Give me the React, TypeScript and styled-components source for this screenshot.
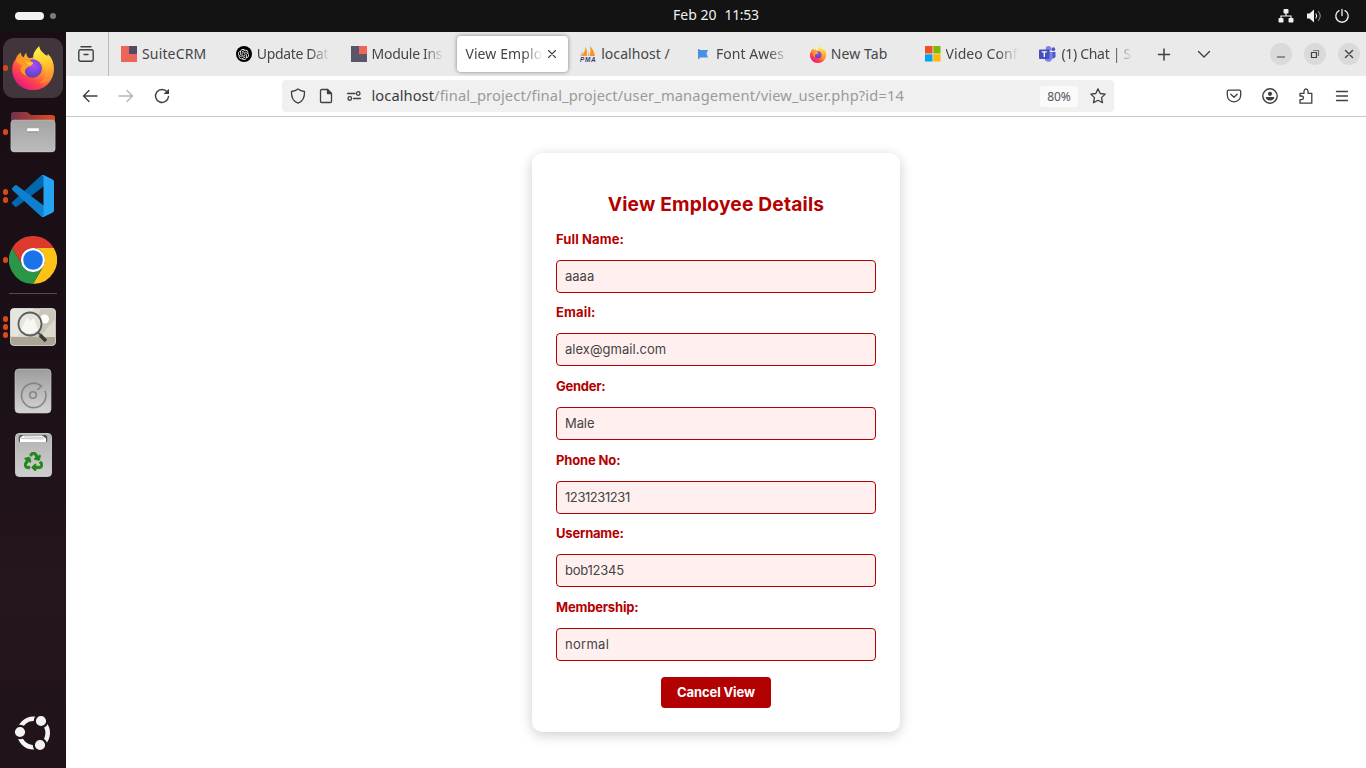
import React from 'react';
import styled, { createGlobalStyle } from 'styled-components';
import { FaRecycle } from 'react-icons/fa';
import { SiOpenai } from 'react-icons/si';

const ui = '"Noto Sans", "Open Sans", sans-serif';
const web = 'Inter, "Liberation Sans", sans-serif';

const GlobalStyle = createGlobalStyle`
  * { box-sizing: border-box; }
  body { margin: 0; overflow: hidden; background: #131313; font-family: ${ui}; }
  svg { display: block; flex: none; }
`;

const Desktop = styled.div`
  display: flex;
  flex-direction: column;
  width: 1366px;
  height: 768px;
`;

/* ---------- system bar ---------- */

const SystemBar = styled.header`
  display: grid;
  grid-template-columns: 657px auto 1fr;
  align-items: center;
  height: 32px;
  padding: 0 16px 0 15px;
  background: #131313;
`;
const Workspaces = styled.div`
  display: flex;
  align-items: center;
  gap: 6px;
`;
const ActiveWorkspace = styled.span`
  width: 29px;
  height: 8px;
  border-radius: 4px;
  background: #f2f2f2;
`;
const IdleWorkspace = styled.span`
  width: 6px;
  height: 6px;
  border-radius: 50%;
  background: #7d7d7d;
`;
const Clock = styled.div`
  display: flex;
  gap: 8px;
  color: #f0f0f0;
  font-size: 14px;
  line-height: 20px;
  padding: 0 0 2px 1px;
`;
const Time = styled.span`
  letter-spacing: -0.3px;
`;
const StatusIcons = styled.div`
  display: flex;
  justify-content: flex-end;
  align-items: center;
  gap: 12px;
`;

/* ---------- dock ---------- */

const Workarea = styled.div`
  display: flex;
  flex: 1;
  min-height: 0;
`;
const Dock = styled.nav`
  display: flex;
  flex-direction: column;
  width: 66px;
  padding: 4px 0 3px;
  background: linear-gradient(#190e14, #1b1017 45%, #25151d 75%, #20131a);
`;
const DockItem = styled.div`
  display: flex;
  align-items: center;
  height: 64px;
`;
const RunningDots = styled.div`
  display: flex;
  flex-direction: column;
  align-items: center;
  gap: 2.4px;
  width: 11px;
  margin-right: -8px;
  z-index: 1;
`;
const Dot = styled.i`
  width: 5.6px;
  height: 5.6px;
  border-radius: 50%;
  background: #da4a16;
`;
const DockTile = styled.div<{ $active?: boolean }>`
  display: flex;
  align-items: center;
  justify-content: center;
  width: 60px;
  height: 60px;
  border-radius: 11px;
  background: ${(p) => (p.$active ? '#41363c' : 'transparent')};
`;
const DockDivider = styled.hr`
  width: 48px;
  height: 1px;
  margin: 1px 9px;
  border: 0;
  background: #55494f;
`;
const DockSpacer = styled.div`
  flex: 1;
`;

/* ---------- browser chrome ---------- */

const Browser = styled.main`
  display: flex;
  flex: 1;
  flex-direction: column;
  background: #fff;
  color: #3c3c40;
`;
const TabStrip = styled.div`
  display: flex;
  align-items: center;
  height: 44px;
  background: #eaeaea;
`;
const TabOverview = styled.div`
  display: flex;
  align-items: center;
  justify-content: center;
  width: 43px;
  height: 44px;
  padding-right: 2px;
  border-right: 1px solid #bdbdbd;
`;
const TabList = styled.div`
  display: flex;
  padding-left: 2px;
`;
const Tab = styled.div<{ $selected?: boolean }>`
  display: flex;
  align-items: center;
  width: ${(p) => (p.$selected ? 110.8 : 114.8)}px;
  height: 36px;
  margin: ${(p) => (p.$selected ? '0 2px' : '0')};
  padding: ${(p) => (p.$selected ? '0 9px 0 8px' : '0 11px 0 10px')};
  gap: ${(p) => (p.$selected ? 2 : 5)}px;
  border-radius: 4px;
  background: ${(p) => (p.$selected ? '#fff' : 'transparent')};
  box-shadow: ${(p) => (p.$selected ? '0 0 4px rgba(0, 0, 0, 0.45)' : 'none')};
`;
const TabTitle = styled.span<{ $spacing: number; $fade: boolean }>`
  flex: 1;
  overflow: hidden;
  white-space: nowrap;
  font-size: 14px;
  line-height: 20px;
  letter-spacing: ${(p) => p.$spacing}px;
  color: #45454a;
  ${(p) => p.$fade && 'mask-image: linear-gradient(to left, transparent, #000 20px);'}
`;
const StripActions = styled.div`
  display: flex;
  align-items: center;
  gap: 24px;
  margin-left: 12px;
`;
const WindowControls = styled.div`
  display: flex;
  gap: 12px;
  margin: 0 6px 0 auto;
`;
const WindowButton = styled.button`
  display: flex;
  align-items: center;
  justify-content: center;
  width: 22px;
  height: 22px;
  padding: 0;
  border: 0;
  border-radius: 50%;
  background: #dadada;
`;
const Toolbar = styled.div`
  display: flex;
  align-items: center;
  height: 41px;
  padding: 0 16px;
  border-bottom: 1px solid #c6c6c6;
  background: #fff;
`;
const NavButtons = styled.div`
  display: flex;
  gap: 20px;
  width: 200px;
`;
const UrlBar = styled.div`
  display: flex;
  align-items: center;
  width: 832px;
  height: 32px;
  padding: 0 8px;
  border-radius: 4px;
  background: #f0f0f0;
`;
const UrlIcons = styled.div`
  display: flex;
  gap: 12px;
`;
const Url = styled.span`
  flex: 1;
  margin-left: 9.5px;
  padding-bottom: 2px;
  color: #9a9a9a;
  font-size: 14.67px;
  line-height: 20px;
  letter-spacing: 0.14px;
  white-space: nowrap;
`;
const Host = styled.span`
  color: #3a3a3e;
  letter-spacing: 0.07px;
`;
const ZoomLevel = styled.span`
  width: 38px;
  margin-right: 12px;
  border-radius: 3px;
  background: #fafafa;
  color: #55555a;
  font-size: 12px;
  line-height: 21px;
  text-align: center;
`;
const ToolbarActions = styled.div`
  display: flex;
  gap: 20px;
  margin-left: auto;
`;

/* ---------- page ---------- */

const Page = styled.section`
  flex: 1;
  padding-top: 36px;
  background: #fff;
  font-family: ${web};
`;
const Card = styled.form`
  display: flex;
  flex-direction: column;
  width: 368px;
  height: 579px;
  margin: 0 auto;
  padding: 24px;
  border-radius: 10px;
  background: #fff;
  box-shadow: 0 3px 13px rgba(0, 0, 0, 0.2);
`;
const Title = styled.h2`
  margin: 0 0 8.75px;
  padding-top: 13px;
  color: #b30000;
  font-size: 19.2px;
  font-weight: 700;
  line-height: 28px;
  letter-spacing: 0.18px;
  text-align: center;
  white-space: nowrap;
`;
const Field = styled.div`
  height: 73.6px;
`;
const Label = styled.label<{ $spacing: number }>`
  display: block;
  height: 33px;
  color: #b30000;
  font-size: 13px;
  font-weight: 700;
  line-height: 25px;
  letter-spacing: ${(p) => p.$spacing}px;
`;
const Value = styled.div<{ $spacing: number }>`
  height: 33px;
  padding: 0 8px;
  border: 1px solid #b30000;
  border-radius: 4px;
  background: #fff0ef;
  color: #444;
  font-size: 13px;
  line-height: 31px;
  letter-spacing: ${(p) => p.$spacing}px;
`;
const CancelButton = styled.button`
  align-self: center;
  width: 110px;
  height: 31px;
  margin-top: 8.65px;
  padding: 0;
  border: 0;
  border-radius: 4px;
  background: #b30000;
  color: #fff;
  font: 700 13px ${web};
  letter-spacing: -0.12px;
`;

/* ---------- app icons ---------- */

const FirefoxIcon = ({ w, h, id }: { w: number; h: number; id: string }) => (
  <svg width={w} height={h} viewBox="0 0 126 133">
    <defs>
      <linearGradient id={`${id}-body`} x1="0.85" y1="0.12" x2="0.2" y2="0.95">
        <stop offset="0" stopColor="#ffe23c" />
        <stop offset="0.35" stopColor="#ff9a2a" />
        <stop offset="0.65" stopColor="#ff4a45" />
        <stop offset="1" stopColor="#e8118a" />
      </linearGradient>
      <linearGradient id={`${id}-flame`} x1="0.5" y1="0" x2="0.7" y2="1">
        <stop offset="0" stopColor="#fff04a" />
        <stop offset="0.5" stopColor="#ffc42f" />
        <stop offset="1" stopColor="#ff7a33" />
      </linearGradient>
      <radialGradient id={`${id}-globe`} cx="0.55" cy="0.35" r="0.7">
        <stop offset="0" stopColor="#a94bff" />
        <stop offset="1" stopColor="#5341b8" />
      </radialGradient>
    </defs>
    <path fill={`url(#${id}-body)`} d="M26 20C27 30 31 33 35 34C37 27 40 23 43 21C43 29 46 34 53 37L66 34C75 28 95 28 105 38L114 30C123 43 126 56 126 70C126 106 98 133 63 133C28 133 0 106 0 70C0 58 4 47 11 39C13 31 19 25 26 20Z" />
    <path fill={`url(#${id}-flame)`} d="M82 0C82 10 91 20 104 29C108 30 107 22 110 26C124 43 128 62 123 82C116 104 98 114 81 112C99 104 107 85 99 65C93 50 76 49 65 38C60 25 72 9 82 0Z" />
    <circle cx="62" cy="68" r="28" fill={`url(#${id}-globe)`} />
    <path fill="#ff9b20" d="M11 43C15 37 23 36 29 36L47 36C52 39 55 42 57 47L64 51C61 62 53 62 48 64C36 69 36 82 46 91C24 84 20 64 32 58C25 56 18 54 11 43Z" />
    <path fill="#ffc42c" d="M40 47L61 49C65 51 60 57 51 59C47 57 44 52 40 47Z" />
  </svg>
);

const FilesIcon = () => (
  <svg width="46" height="42" viewBox="0 0 46 42">
    <defs>
      <linearGradient id="folder-back"><stop stopColor="#74304f" /><stop offset="1" stopColor="#dd4d1d" /></linearGradient>
      <linearGradient id="folder-front" x2="0" y2="1"><stop stopColor="#a3a3a3" /><stop offset="1" stopColor="#bcbcbc" /></linearGradient>
    </defs>
    <path fill="url(#folder-back)" d="M4 1H17L21 4H42Q45 4 45 7V22H1V4Q1 1 4 1Z" />
    <rect x="0.8" y="9" width="44.4" height="32" rx="3.5" fill="url(#folder-front)" stroke="#ddd" strokeOpacity="0.5" strokeWidth="0.7" />
    <rect x="17" y="17.2" width="12" height="3" rx="1.2" fill="#fff" />
    <path stroke="#888" strokeWidth="0.7" d="M18 21H28" />
  </svg>
);

const CodeIcon = () => (
  <svg width="42" height="42" viewBox="0 0 100 100">
    <path fill="#0068ad" d="M96.46 10.8 75.86.88a6.23 6.23 0 0 0-7.1 1.2L1.3 63.6a4.17 4.17 0 0 0 0 6.16l5.5 5a4.17 4.17 0 0 0 5.33.24l81.2-61.6c2.73-2.06 6.66-.11 6.66 3.3v-.24a6.25 6.25 0 0 0-3.53-5.63z" />
    <path fill="#0d80cf" d="M96.46 89.2 75.86 99.12a6.23 6.23 0 0 1-7.1-1.2L1.3 36.4a4.17 4.17 0 0 1 0-6.16l5.5-5a4.17 4.17 0 0 1 5.33-.24l81.2 61.6c2.73 2.06 6.66.11 6.66-3.3v.24a6.25 6.25 0 0 1-3.53 5.63z" />
    <path fill="#25a4f4" d="M75.86 99.13a6.23 6.23 0 0 1-7.11-1.21c2.31 2.31 6.25.67 6.25-2.59V4.67c0-3.26-3.94-4.9-6.25-2.59a6.23 6.23 0 0 1 7.1-1.2l20.6 9.9a6.25 6.25 0 0 1 3.55 5.64v67.17c0 2.4-1.38 4.6-3.54 5.63z" />
  </svg>
);

const ChromeIcon = () => (
  <svg width="48" height="48" viewBox="0 0 48 48">
    <path fill="#dd3a2e" d="M3.2 12A24 24 0 0 1 44.8 12H24A12 12 0 0 0 13.6 30Z" />
    <path fill="#fcc316" d="M44.8 12A24 24 0 0 1 24 48L34.4 30A12 12 0 0 0 24 12Z" />
    <path fill="#2a9648" d="M24 48A24 24 0 0 1 3.2 12L13.6 30A12 12 0 0 0 34.4 30Z" />
    <circle cx="24" cy="24" r="12" fill="#fff" />
    <circle cx="24" cy="24" r="9.8" fill="#1b73e8" />
  </svg>
);

const ImageViewerIcon = () => (
  <svg width="46" height="38" viewBox="0 0 46 38">
    <defs><clipPath id="photo"><rect x="0.5" y="0.5" width="45" height="37" rx="3.5" /></clipPath></defs>
    <g clipPath="url(#photo)">
      <rect width="46" height="38" fill="#dbdacd" />
      <path fill="#c9c8ba" d="M31 0H46V10L30 29H20Z" />
      <path fill="#e6e6de" d="M0 0H24L8 28H0Z" />
      <circle cx="34.5" cy="11" r="4.5" fill="#fff" />
      <rect y="29" width="46" height="9" fill="#aaa594" />
    </g>
    <circle cx="20" cy="16" r="11.5" fill="#e4e4dd" fillOpacity="0.9" stroke="#5c5c5c" strokeWidth="1.8" />
    <path fill="#f6f6f3" d="M11 22L17 9L20 13L24 10L28 22Q20 29 11 22Z" />
    <path stroke="#5c5c5c" strokeWidth="2" d="M28 24.5L31 27.5" />
    <path stroke="#383838" strokeWidth="3.6" d="M30 27L36 33" />
    <rect x="0.5" y="0.5" width="45" height="37" rx="3.5" fill="none" stroke="#efefe8" strokeOpacity="0.6" />
  </svg>
);

const DiskIcon = () => (
  <svg width="38" height="46" viewBox="0 0 38 46">
    <defs><linearGradient id="disk" x2="0" y2="1"><stop stopColor="#9c9c9c" /><stop offset="1" stopColor="#d4d4d4" /></linearGradient></defs>
    <rect x="1" y="1" width="36" height="44" rx="4" fill="url(#disk)" stroke="#d0d0d0" strokeWidth="0.6" />
    <g fill="none" stroke="#858585" strokeWidth="1.6">
      <path d="M31 22.8A12.2 12.2 0 1 1 24.5 16.2L27.5 18L23.5 22" />
      <circle cx="19" cy="27" r="3.3" />
    </g>
  </svg>
);

const TrashBin = styled.div`
  display: flex;
  flex-direction: column;
  align-items: center;
  width: 37px;
  height: 44px;
  border: 1px solid #c4c4c4;
  border-radius: 4px;
  background: linear-gradient(#b3b3b3, #cecece);
  color: #21871a;
`;
const TrashIcon = () => (
  <TrashBin>
    <svg width="32" height="18" viewBox="0 0 32 18">
      <path fill="#595959" d="M3 1H29Q31 2 30 8H2Q1 3 3 1Z" />
      <path fill="#fff" d="M3 8V4L6 1.500H25L29 4.5V8Z" />
      <path fill="none" stroke="#aaa" strokeWidth="0.7" d="M4 4.500L27 5M7 2.800L26 3.500" />
    </svg>
    <FaRecycle size={19} stroke="currentColor" strokeWidth={22} />
  </TrashBin>
);

const UbuntuIcon = () => (
  <svg width="38" height="38" viewBox="0 0 38 38">
    <circle cx="19.5" cy="19" r="14.2" fill="none" stroke="#f4f4f4" strokeWidth="4.6" />
    <g fill="#f2f2f2" stroke="#20131a" strokeWidth="2.2">
      <circle cx="6" cy="18" r="6.2" />
      <circle cx="27" cy="7" r="6.2" />
      <circle cx="26" cy="31" r="6.2" />
    </g>
  </svg>
);

/* ---------- tab icons ---------- */

const SquaresIcon = ({ base, corner }: { base: string; corner: string }) => (
  <svg width="16" height="16"><path fill={base} d="M0 0H16V16H0Z" /><path fill={corner} d="M8 0H16V8H8Z" /></svg>
);
const OpenAIBadge = styled.span`
  display: flex;
  align-items: center;
  justify-content: center;
  width: 16px;
  height: 16px;
  border-radius: 50%;
  background: #000;
  color: #fff;
`;
const SailsIcon = () => (
  <svg width="16" height="16" viewBox="0 0 16 16">
    <path fill="#f79422" d="M5.5 1Q7.5 4 6.8 10H1.2Q5.5 6 5.5 1ZM10 0Q14.5 5 14.8 10H9.5Q11.5 5 10 0Z" />
    <path fill="#c9b8a0" d="M9 4V10H7.6ZM3 5V8L1 10H0Z" />
    <text x="0" y="15.6" fontFamily="Liberation Sans" fontWeight="700" fontStyle="italic" fontSize="6.4" fill="#3d3a78" textLength="15.5">PMA</text>
  </svg>
);
const FlagIcon = () => (
  <svg width="16" height="16" viewBox="0 0 16 16"><path fill="#4a90e2" d="M3 3H4.5V4H13L11.5 7.5L13 11.5H4.5V13H3Z" /></svg>
);
const MicrosoftIcon = () => (
  <svg width="16" height="16" viewBox="0 0 16 16">
    <path fill="#f25022" d="M0 0H7.5V7.5H0Z" /><path fill="#7fba00" d="M8.3 0H15.5V7.5H8.3Z" />
    <path fill="#00a4ef" d="M0 8.3H7.5V15.5H0Z" /><path fill="#ffb900" d="M8.3 8.3H15.5V15.5H8.3Z" />
  </svg>
);
const TeamsIcon = () => (
  <svg width="17" height="16" viewBox="0 0 17 16">
    <circle cx="9.5" cy="2.8" r="2.7" fill="#7b83eb" /><circle cx="14.3" cy="3.2" r="1.9" fill="#5059c9" />
    <path fill="#5059c9" d="M12 6H16.5V10.5Q16 13 13 12.5Z" />
    <path fill="#7b83eb" d="M6 6H13.5V11.5Q13 15.5 9.5 15.8Q5.5 15.5 5.5 12Z" />
    <rect y="3.5" width="10.5" height="9.5" rx="0.8" fill="#4650b8" />
    <path stroke="#fff" strokeWidth="1.3" d="M2.8 5.9H7.8M5.3 6V11" />
  </svg>
);

/* ---------- line icons ---------- */

const Line = ({ children, color = '#3f3f44', size = 16, width = 1.3 }: { children: React.ReactNode; color?: string; size?: number; width?: number }) => (
  <svg width={size} height={size} viewBox="0 0 16 16" fill="none" stroke={color} strokeWidth={width} strokeLinecap="round" strokeLinejoin="round">{children}</svg>
);

const tabs: { title: string; spacing: number; icon?: React.ReactNode; selected?: boolean; fade?: boolean }[] = [
  { title: 'SuiteCRM', spacing: 0.15, icon: <SquaresIcon base="#ec6556" corner="#514b65" /> },
  { title: 'Update Dat', spacing: -0.35, icon: <OpenAIBadge><SiOpenai size={11} /></OpenAIBadge>, fade: true },
  { title: 'Module Ins', spacing: -0.3, icon: <SquaresIcon base="#5c566b" corner="#f26457" />, fade: true },
  { title: 'View Emplo', spacing: 0.1, selected: true, fade: true },
  { title: 'localhost /', spacing: 0.05, icon: <SailsIcon /> },
  { title: 'Font Awes', spacing: 0.05, icon: <FlagIcon />, fade: true },
  { title: 'New Tab', spacing: 0.1, icon: <FirefoxIcon w={16} h={17} id="tab" /> },
  { title: 'Video Conf', spacing: 0.05, icon: <MicrosoftIcon />, fade: true },
  { title: '(1) Chat | S', spacing: -0.3, icon: <TeamsIcon />, fade: true },
];

const apps: { dots: number; icon: React.ReactNode; active?: boolean }[] = [
  { dots: 1, icon: <FirefoxIcon w={42} h={44} id="dock" />, active: true },
  { dots: 1, icon: <FilesIcon /> },
  { dots: 2, icon: <CodeIcon /> },
  { dots: 1, icon: <ChromeIcon /> },
];
const utilities = [
  { dots: 3, icon: <ImageViewerIcon /> },
  { dots: 0, icon: <DiskIcon /> },
  { dots: 0, icon: <TrashIcon /> },
];

const fields = [
  { label: 'Full Name:', ls: 0.12, value: 'aaaa', vs: 0 },
  { label: 'Email:', ls: 0.15, value: 'alex@gmail.com', vs: 0.03 },
  { label: 'Gender:', ls: -0.25, value: 'Male', vs: -0.1 },
  { label: 'Phone No:', ls: -0.14, value: '1231231231', vs: -0.42 },
  { label: 'Username:', ls: -0.2, value: 'bob12345', vs: -0.25 },
  { label: 'Membership:', ls: -0.18, value: 'normal', vs: 0.28 },
];

const DockEntry = ({ dots, icon, active }: { dots: number; icon: React.ReactNode; active?: boolean }) => (
  <DockItem>
    <RunningDots>{Array.from({ length: dots }, (_, i) => <Dot key={i} />)}</RunningDots>
    <DockTile $active={active}>{icon}</DockTile>
  </DockItem>
);

export default function App() {
  return (
    <Desktop>
      <GlobalStyle />
      <SystemBar>
        <Workspaces><ActiveWorkspace /><IdleWorkspace /></Workspaces>
        <Clock><span>Feb 20</span><Time>11:53</Time></Clock>
        <StatusIcons>
          <svg width="16" height="16" viewBox="0 0 16 16" fill="#f2f2f2">
            <rect x="5.5" y="1" width="5" height="4.5" rx="1" /><rect x="0.5" y="10" width="5" height="4.5" rx="1" /><rect x="10.5" y="10" width="5" height="4.5" rx="1" />
            <path fill="none" stroke="#f2f2f2" strokeWidth="1.2" d="M8 5V8M3 10.500V8H13V10.500" />
          </svg>
          <svg width="16" height="16" viewBox="0 0 16 16" fill="none" strokeLinecap="round" strokeWidth="1.2">
            <path fill="#f2f2f2" d="M1 5.500H3.500L8 1.500V14.500L3.500 10.500H1Z" />
            <path stroke="#e4e4e4" d="M10 6Q11.400 8 10 10" /><path stroke="#858585" d="M12.400 3.500Q16 8 12.400 12.500" />
          </svg>
          <Line color="#f2f2f2" width={1.3}><path d="M5 2.600A6.200 6.200 0 1 0 11 2.600M8 1.500V7.500" /></Line>
        </StatusIcons>
      </SystemBar>
      <Workarea>
        <Dock>
          {apps.map((a, i) => <DockEntry key={i} {...a} />)}
          <DockDivider />
          {utilities.map((a, i) => <DockEntry key={i} {...a} />)}
          <DockSpacer />
          <DockEntry dots={0} icon={<UbuntuIcon />} />
        </Dock>
        <Browser>
          <TabStrip>
            <TabOverview>
              <Line width={1.4}><path d="M3 0.800H13M2.500 3.700H13.500Q15.200 3.700 15.200 5.400V13.500Q15.200 15.200 13.500 15.200H2.500Q0.800 15.200 0.800 13.500V5.400Q0.800 3.700 2.500 3.700ZM6 8.500H10" /></Line>
            </TabOverview>
            <TabList>
              {tabs.map((t) => (
                <Tab key={t.title} $selected={t.selected}>
                  {t.icon}
                  <TabTitle $spacing={t.spacing} $fade={!!t.fade}>{t.title}</TabTitle>
                  {t.selected && <Line size={14} width={1.3}><path d="M4 4L12 12M12 4L4 12" /></Line>}
                </Tab>
              ))}
            </TabList>
            <StripActions>
              <Line width={1.5}><path d="M2.500 8.500H13.500M8 3V14" /></Line>
              <Line width={1.4}><path d="M2.500 5.500L8 11L13.500 5.500" /></Line>
            </StripActions>
            <WindowControls>
              <WindowButton><Line width={1.2}><path d="M4.500 11H11.500" /></Line></WindowButton>
              <WindowButton><Line width={1.2}><path d="M4.500 6.500H9.500V11.500H4.500Z" /><path stroke="#77777a" d="M6.500 4.500H11.500V9.500" /></Line></WindowButton>
              <WindowButton><Line width={1.4}><path d="M4.500 4.500L11.500 11.500M11.500 4.500L4.500 11.500" /></Line></WindowButton>
            </WindowControls>
          </TabStrip>
          <Toolbar>
            <NavButtons>
              <Line width={1.4}><path d="M15 8H1.500M7 2.500L1.500 8L7 13.500" /></Line>
              <Line width={1.4} color="#b5b5b5"><path d="M1 8H14.500M9 2.500L14.500 8L9 13.500" /></Line>
              <Line width={1.4}><path d="M13.200 4A6.500 6.500 0 1 0 14.500 8.500" /><path fill="#3f3f44" stroke="none" d="M9.500 6H15V0.800Z" /></Line>
            </NavButtons>
            <UrlBar>
              <UrlIcons>
                <Line><path d="M8 1Q10.500 3 14.500 3.500C14.800 9 12.500 13.500 8 15.200C3.500 13.500 1.200 9 1.500 3.500Q5.500 3 8 1Z" /></Line>
                <Line><path d="M4 1.500H9.500L13.500 5.500V13.500Q13.500 14.500 12.500 14.500H3.500Q2.500 14.500 2.500 13.500V2.500Q2.500 1.500 4 1.500Z" /><path fill="#3f3f44" d="M9.500 1.500V5.500H13.500Z" /></Line>
                <Line><path d="M1.500 5.500H9M7.500 10.500H14.500" /><circle cx="12.200" cy="5.500" r="1.800" /><circle cx="3.800" cy="10.500" r="1.800" /></Line>
              </UrlIcons>
              <Url><Host>localhost</Host>/final_project/final_project/user_management/view_user.php?id=14</Url>
              <ZoomLevel>80%</ZoomLevel>
              <Line><path d="M8 0.900L10.200 5.500L15.200 6.100L11.500 9.600L12.500 14.700L8 12.200L3.500 14.700L4.500 9.600L0.800 6.100L5.800 5.500Z" /></Line>
            </UrlBar>
            <ToolbarActions>
              <Line><path d="M2.700 2.200H13.300Q14.700 2.200 14.700 3.600V7.300Q14.300 13.500 8 13.800Q1.700 13.500 1.300 7.300V3.600Q1.300 2.200 2.700 2.200ZM4.800 6.200L8 9.200L11.200 6.200" /></Line>
              <Line width={1.4}><circle cx="8" cy="8" r="7.200" /><circle cx="8" cy="5.800" r="2.100" fill="#3f3f44" stroke="none" /><path fill="#3f3f44" stroke="none" d="M3.600 9H12.400Q12 12.300 8 12.600Q4 12.300 3.600 9Z" /></Line>
              <Line><path d="M2 15.200V11.600H3.700Q5.500 11.300 5.500 9.700Q5.500 8.200 3.700 8H2V5.300H6V3Q6.300 1 8 1Q9.700 1 10 3V5.300H13.800V15.200Z" /></Line>
              <Line width={1.3}><path d="M2.500 3.500H13.500M2.500 8H13.500M2.500 12.500H13.500" /></Line>
            </ToolbarActions>
          </Toolbar>
          <Page>
            <Card>
              <Title>View Employee Details</Title>
              {fields.map((f) => (
                <Field key={f.label}>
                  <Label $spacing={f.ls}>{f.label}</Label>
                  <Value $spacing={f.vs}>{f.value}</Value>
                </Field>
              ))}
              <CancelButton type="button">Cancel View</CancelButton>
            </Card>
          </Page>
        </Browser>
      </Workarea>
    </Desktop>
  );
}
